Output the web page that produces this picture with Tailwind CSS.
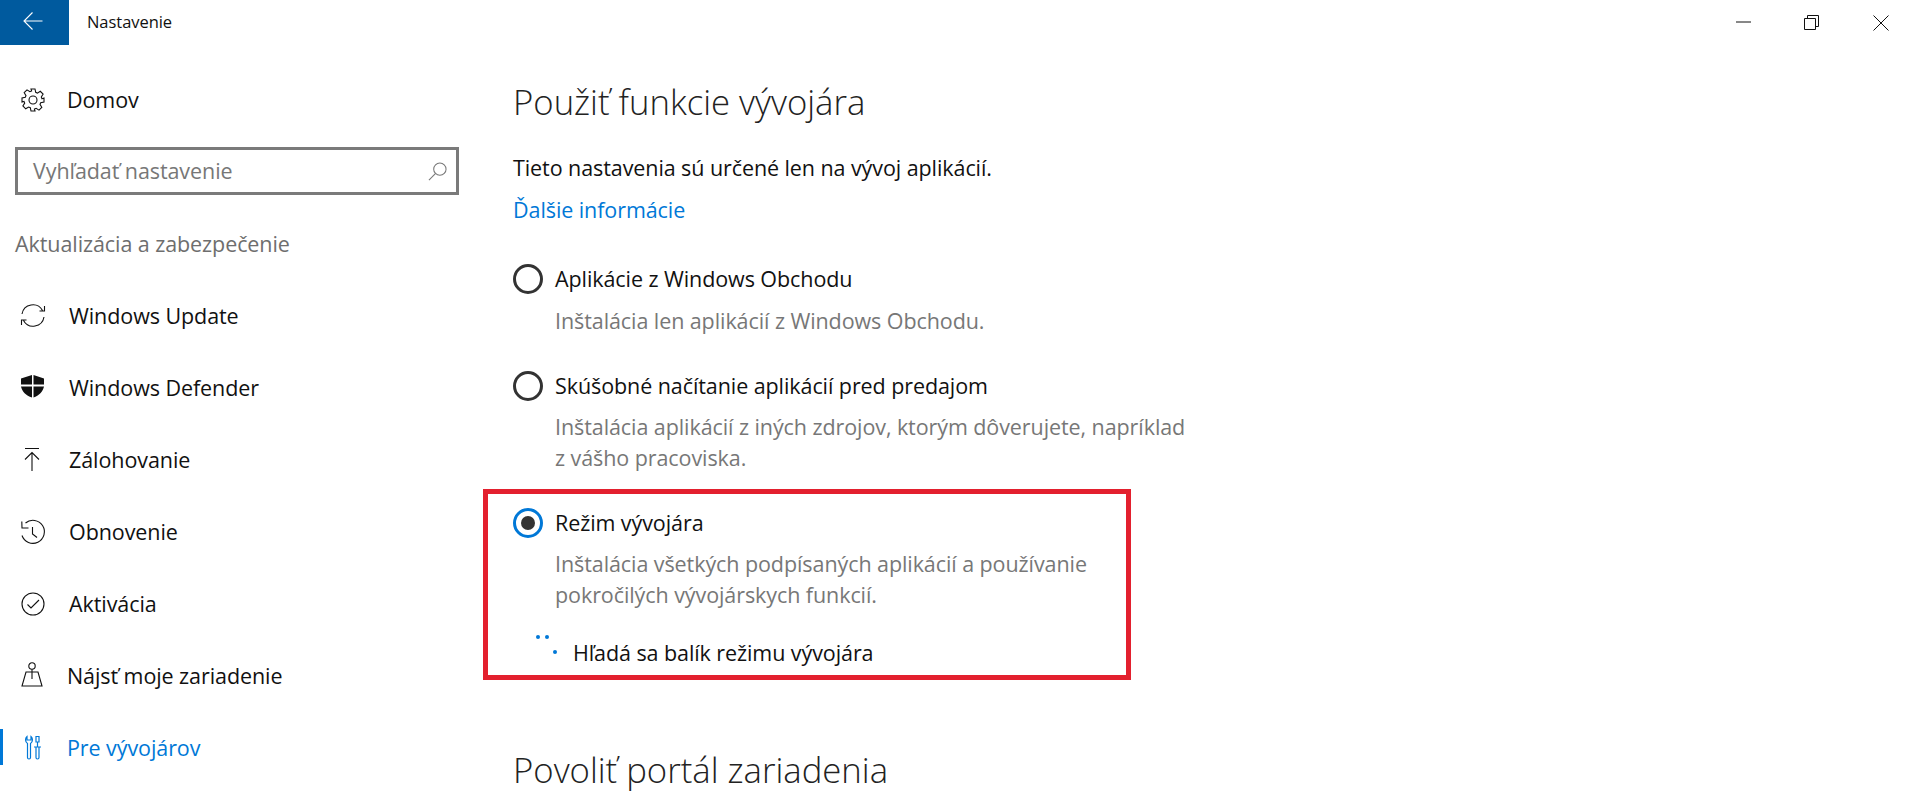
<!DOCTYPE html>
<html lang="sk"><head><meta charset="utf-8">
<script src="https://cdn.jsdelivr.net/npm/@tailwindcss/browser@4"></script>
</head>
<body class="bg-white overflow-hidden font-['Open_Sans','Noto_Sans',sans-serif] text-black">
<div class="w-[1917px] h-[793px] overflow-hidden flex flex-col">
  <header class="h-[45px] shrink-0 flex items-center">
    <div class="w-[69px] h-[45px] bg-[#005a9e] flex items-center justify-center">
      <svg class="w-[20px] h-[20px] -translate-x-[2px] -translate-y-[2px]" viewBox="0 0 20 20" fill="none" stroke="#fff" stroke-width="1.1"><path d="M1 10h18.500M9.500 1.500 1 10l8.500 8.500"/></svg>
    </div>
    <div class="ml-[18px] text-[16.500px] tracking-[-0.05px] text-[#111]">Nastavenie</div>
    <div class="ml-auto flex items-center gap-[53px] mr-[28px]">
      <svg class="w-[16px] h-[16px]" viewBox="0 0 16 16" fill="none" stroke="#111" stroke-width="1"><path d="M1 7h15"/></svg>
      <svg class="w-[16px] h-[16px]" viewBox="0 0 16 16" fill="none" stroke="#111" stroke-width="1"><path d="M.5 3.500h11v11H.5zM3.500 3.500v-3h11v11h-3"/></svg>
      <svg class="w-[16px] h-[16px]" viewBox="0 0 16 16" fill="none" stroke="#111" stroke-width="1"><path d="M.5.500l15 15M15.500.500l-15 15"/></svg>
    </div>
  </header>
  <div class="flex flex-1 min-h-0 relative">
    <aside class="w-[484px] shrink-0 flex flex-col">
      <div class="h-[48px] mt-[31px] flex items-center pl-[21px]">
        <svg class="w-[24px] h-[24px]" viewBox="0 0 24 24" fill="none" stroke="#111" stroke-width="1.100"><circle cx="12" cy="12" r="4"/><path d="M10 1h4l.7 3.300 1.700.8 2.900-1.800 2.800 2.800-1.800 2.900.7 1.700L23 10v4l-3.300.7-.7 1.700 1.800 2.900-2.800 2.800-2.900-1.800-1.700.7L14 23h-4l-.7-3.300-1.700-.7-2.900 1.800-2.800-2.800 1.800-2.900-.7-1.700L1 14v-4l3.300-.7.700-1.700-1.800-2.900 2.800-2.800 2.900 1.800 1.700-.8z"/></svg>
        <span class="ml-[22px] text-[21.500px] tracking-[-0.08px] text-[#111]">Domov</span>
      </div>
      <div class="mt-[23px] ml-[15px] w-[444px] h-[48px] border-[3px] border-[#7a7a7a] flex items-center pl-[15px] pr-[9px]">
        <span class="text-[21.500px] tracking-[-0.08px] text-[#777]">Vyhľadať nastavenie</span>
        <svg class="ml-auto w-[19px] h-[19px]" viewBox="0 0 20 20" fill="none" stroke="#777" stroke-width="1.100"><circle cx="12.500" cy="7.500" r="6.500"/><path d="M8 12 1 19"/></svg>
      </div>
      <div class="mt-[29px] ml-[15px] h-[40px] flex items-center text-[21.500px] tracking-[-0.08px] text-[#6e6e6e]">Aktualizácia a zabezpečenie</div>
      <nav class="mt-[16px] flex flex-col">
        <a class="h-[72px] flex items-center pl-[21px] text-[#111]">
          <svg class="w-[24px] h-[24px] shrink-0 overflow-visible" viewBox="0 0 24 24" fill="none" stroke="#111" stroke-width="1.100"><path d="M1 10A11 11 0 0 1 21.500 6.500M23.500 2v5h-5M23 13A11 11 0 0 1 2.500 16.500M.5 21v-5h5"/></svg>
          <span class="ml-[24px] text-[21.500px] tracking-[-0.08px]">Windows Update</span>
        </a>
        <a class="h-[72px] flex items-center pl-[21px] text-[#111]">
          <svg class="w-[24px] h-[24px] shrink-0 overflow-visible" viewBox="0 0 24 24" fill="#111"><path d="M11 -1 0 2.500v6h11zM12.500 -1 23 2.500v6H12.500zM0 10.500h11V21.500C5 19.500 1 15.500 0 10.500zM12.500 10.500H23c-1 5-5 9-10.500 11z"/></svg>
          <span class="ml-[24px] text-[21.500px] tracking-[-0.08px]">Windows Defender</span>
        </a>
        <a class="h-[72px] flex items-center pl-[21px] text-[#111]">
          <svg class="w-[24px] h-[24px] shrink-0" viewBox="0 0 24 24" fill="none" stroke="#111" stroke-width="1.100"><path d="M4 .500h14M11 23V4.500M4 11.500l7-7 7 7"/></svg>
          <span class="ml-[24px] text-[21.500px] tracking-[-0.08px]">Zálohovanie</span>
        </a>
        <a class="h-[72px] flex items-center pl-[21px] text-[#111]">
          <svg class="w-[24px] h-[24px] shrink-0 overflow-visible" viewBox="0 0 24 24" fill="none" stroke="#111" stroke-width="1.100"><path d="M4.500 3A11.500 11.500 0 1 1 1 15.500M.8 1.500 1 8h6.500M11.500 7v7l4.500 3.500"/></svg>
          <span class="ml-[24px] text-[21.500px] tracking-[-0.08px]">Obnovenie</span>
        </a>
        <a class="h-[72px] flex items-center pl-[21px] text-[#111]">
          <svg class="w-[24px] h-[24px] shrink-0" viewBox="0 0 24 24" fill="none" stroke="#111" stroke-width="1.100"><circle cx="12" cy="12" r="11"/><path d="m6.500 12.500 3.500 3.500 8-8"/></svg>
          <span class="ml-[24px] text-[21.500px] tracking-[-0.08px]">Aktivácia</span>
        </a>
        <a class="h-[72px] flex items-center pl-[21px] text-[#111]">
          <svg class="w-[24px] h-[24px] shrink-0 overflow-visible" viewBox="0 0 24 24" fill="none" stroke="#111" stroke-width="1.100"><circle cx="11" cy="2" r="3.200"/><path d="M11 5.200V15M5 8h12l4 14H1z"/></svg>
          <span class="ml-[22px] text-[21.500px] tracking-[-0.08px]">Nájsť moje zariadenie</span>
        </a>
        <a class="h-[72px] flex items-center pl-[21px] text-[#0078d7] relative">
          <span class="absolute left-0 top-[17px] w-[3px] h-[36px] bg-[#0078d7]"></span>
          <svg class="w-[24px] h-[24px] shrink-0 overflow-visible" viewBox="0 0 24 24" fill="none" stroke="#0078d7" stroke-width="1.200"><path d="M6 .5C4 2 4 6 6.500 7.500V21.500a1.500 1.500 0 0 0 3 0V7.500C12 6 12 2 10 .5V4H6zM15 .5h3v5.500h-3zM16.500 6v5M13 11h7M15 11v10.500a1.500 1.500 0 0 0 3 0V11"/></svg>
          <span class="ml-[22px] text-[21.500px] tracking-[-0.08px]">Pre vývojárov</span>
        </a>
      </nav>
    </aside>
    <main class="flex-1 pl-[29px] pt-[33px] relative">
      <h1 class="text-[34.700px] leading-[48px] font-light text-[#222]">Použiť funkcie vývojára</h1>
      <p class="mt-[26px] text-[21.500px] leading-[32px] tracking-[-0.08px] text-[#111]">Tieto nastavenia sú určené len na vývoj aplikácií.</p>
      <a class="block mt-[10px] text-[21.500px] leading-[32px] tracking-[-0.08px] text-[#0078d7]">Ďalšie informácie</a>
      <div class="mt-[37px] flex items-center gap-[12px] h-[32px]">
        <span class="w-[30px] h-[30px] rounded-full border-[3px] border-[#333]"></span>
        <span class="text-[21.500px] tracking-[-0.08px] text-[#111]">Aplikácie z Windows Obchodu</span>
      </div>
      <p class="ml-[42px] mt-[10px] text-[21.500px] leading-[32px] tracking-[-0.08px] text-[#777]">Inštalácia len aplikácií z Windows Obchodu.</p>
      <div class="mt-[33px] flex items-center gap-[12px] h-[32px]">
        <span class="w-[30px] h-[30px] rounded-full border-[3px] border-[#333]"></span>
        <span class="text-[21.500px] tracking-[-0.08px] text-[#111]">Skúšobné načítanie aplikácií pred predajom</span>
      </div>
      <p class="ml-[42px] mt-[10px] w-[640px] text-[21.500px] leading-[30.500px] tracking-[-0.08px] text-[#777]">Inštalácia aplikácií z iných zdrojov, ktorým dôverujete, napríklad z vášho pracoviska.</p>
      <div class="mt-[34px] flex items-center gap-[12px] h-[32px]">
        <span class="w-[30px] h-[30px] rounded-full border-[3px] border-[#0078d7] flex items-center justify-center"><span class="w-[14px] h-[14px] rounded-full bg-[#333]"></span></span>
        <span class="text-[21.500px] tracking-[-0.08px] text-[#111]">Režim vývojára</span>
      </div>
      <p class="ml-[42px] mt-[10px] w-[630px] text-[21.500px] leading-[30.500px] tracking-[-0.08px] text-[#777]">Inštalácia všetkých podpísaných aplikácií a používanie pokročilých vývojárskych funkcií.</p>
      <div class="mt-[27px] flex items-center h-[32px] relative">
        <span class="absolute left-[23px] top-[-2px] w-[4px] h-[4px] rounded-full bg-[#0078d7]"></span>
        <span class="absolute left-[32px] top-[-2px] w-[4px] h-[4px] rounded-full bg-[#0078d7]"></span>
        <span class="absolute left-[40px] top-[13px] w-[4px] h-[4px] rounded-full bg-[#0078d7]"></span>
        <span class="ml-[60px] text-[21.500px] tracking-[-0.08px] text-[#111]">Hľadá sa balík režimu vývojára</span>
      </div>
      <h2 class="mt-[77px] text-[34.700px] leading-[48px] font-light text-[#222]">Povoliť portál zariadenia</h2>
      <div class="absolute left-[-1px] top-[444px] w-[648px] h-[191px] border-[5px] border-[#e3202e] pointer-events-none"></div>
    </main>
  </div>
</div>
</body></html>
